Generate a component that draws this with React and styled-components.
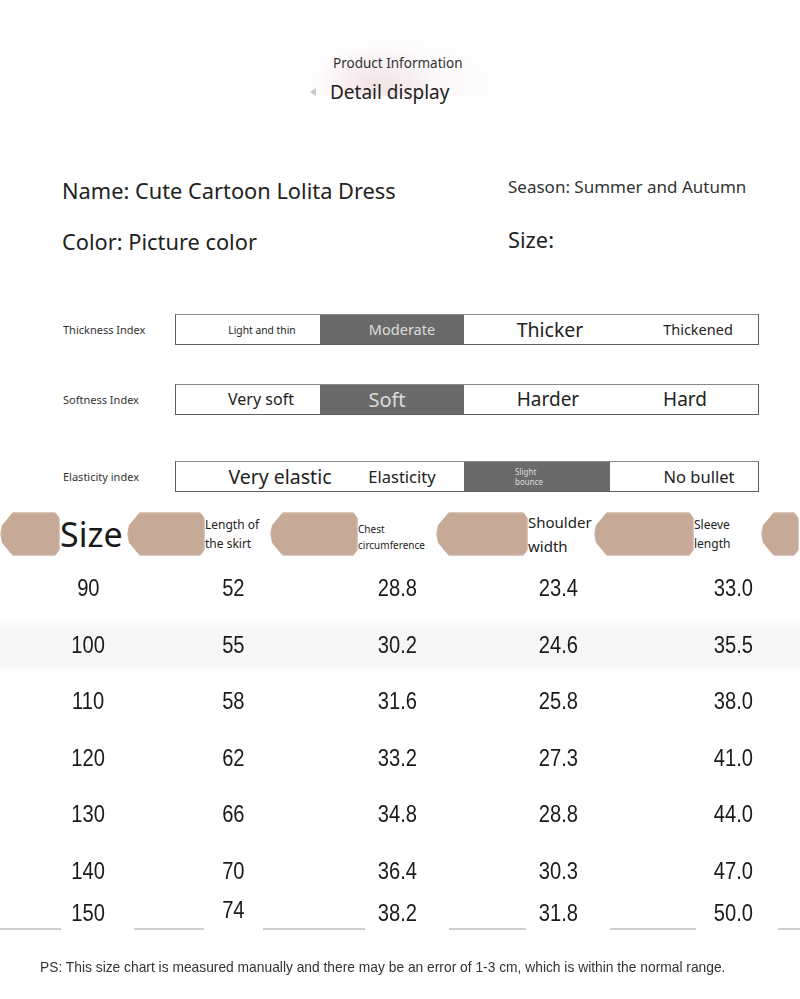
import React from "react";
import styled, { createGlobalStyle } from "styled-components";

const GlobalStyle = createGlobalStyle`
    body {
        margin: 0;
        background: #ffffff;
        font-family: "Noto Sans", "Liberation Sans", sans-serif;
        color: #222222;
    }
`;

const indexRows = [
    {
        label: "Thickness Index",
        items: [
            { text: "Light and thin", size: 10.3, shift: 14 },
            { text: "Moderate", size: 14.5, shift: 10, active: true },
            { text: "Thicker", size: 19.5, shift: 13 },
            { text: "Thickened", size: 14.5, shift: 14 },
        ],
    },
    {
        label: "Softness Index",
        items: [
            { text: "Very soft", size: 16, shift: 13 },
            { text: "Soft", size: 20, shift: -5, active: true },
            { text: "Harder", size: 19, shift: 11 },
            { text: "Hard", size: 19, shift: 1 },
        ],
    },
    {
        label: "Elasticity index",
        items: [
            { text: "Very elastic", size: 19.5, shift: 32 },
            { text: "Elasticity", size: 16.5, shift: 10 },
            { text: "Slight\nbounce", size: 8, shift: -8, active: true },
            { text: "No bullet", size: 16.5, shift: 15 },
        ],
    },
];

const sizes = [
    ["90", "52", "28.8", "23.4", "33.0"],
    ["100", "55", "30.2", "24.6", "35.5"],
    ["110", "58", "31.6", "25.8", "38.0"],
    ["120", "62", "33.2", "27.3", "41.0"],
    ["130", "66", "34.8", "28.8", "44.0"],
    ["140", "70", "36.4", "30.3", "47.0"],
];

const App = () => {
    return (
        <Page>
            <GlobalStyle />
            <Header>
                <SubTitle>Product Information</SubTitle>
                <Title>Detail display</Title>
            </Header>

            <InfoGrid>
                <BigInfo>Name: Cute Cartoon Lolita Dress</BigInfo>
                <SmallInfo>Season: Summer and Autumn</SmallInfo>
                <BigInfo>Color: Picture color</BigInfo>
                <BigInfo>Size:</BigInfo>
            </InfoGrid>

            <Indexes>
                {indexRows.map((row) => (
                    <IndexRow key={row.label}>
                        <IndexLabel>{row.label}</IndexLabel>
                        <Bar>
                            {row.items.map((item) => (
                                <Segment key={item.text} $active={item.active}>
                                    <SegmentText
                                        $size={item.size}
                                        $shift={item.shift}
                                    >
                                        {item.text}
                                    </SegmentText>
                                </Segment>
                            ))}
                        </Bar>
                    </IndexRow>
                ))}
            </Indexes>

            <Band>
                <Blob $w={60} />
                <SizeHead>Size</SizeHead>
                <Blob $w={78} />
                <HeadLabel $w={65} $size={12}>
                    Length of
                    <br />
                    the skirt
                </HeadLabel>
                <Blob $w={88} />
                <HeadLabel $w={78} $size={10} $drop>
                    Chest
                    <br />
                    circumference
                </HeadLabel>
                <Blob $w={92} />
                <HeadLabel $w={66} $size={15}>
                    Shoulder
                    <br />
                    width
                </HeadLabel>
                <Blob $w={100} />
                <HeadLabel $w={67} $size={12}>
                    Sleeve
                    <br />
                    length
                </HeadLabel>
                <Blob $w={38} />
            </Band>

            <Table>
                {sizes.map((row, i) => (
                    <DataRow key={row[0]} $shade={i === 1}>
                        {row.map((v, j) => (
                            <Cell key={j}>
                                <Num>{v}</Num>
                            </Cell>
                        ))}
                    </DataRow>
                ))}
                <LastRow>
                    <Cell>
                        <Num>150</Num>
                    </Cell>
                    <Cell $lift>
                        <Num>74</Num>
                    </Cell>
                    <Cell>
                        <Num>38.2</Num>
                    </Cell>
                    <Cell>
                        <Num>31.8</Num>
                    </Cell>
                    <Cell>
                        <Num>50.0</Num>
                    </Cell>
                </LastRow>
                <Rule>
                    <Dash $w={61} />
                    <Dash $w={70} $gap={73} />
                    <Dash $w={102} $gap={59} />
                    <Dash $w={77} $gap={84} />
                    <Dash $w={86} $gap={84} />
                    <Dash $w={22} $gap={82} />
                </Rule>
            </Table>

            <Note>
                PS: This size chart is measured manually and there may be an
                error of 1-3 cm, which is within the normal range.
            </Note>
        </Page>
    );
};

const Page = styled.div`
    width: 800px;
    height: 999px;
    overflow: hidden;
    background: #ffffff;
`;

const Header = styled.header`
    display: flex;
    flex-direction: column;
    align-items: flex-start;
    padding: 53px 0 0 330px;
    height: 96px;
    box-sizing: border-box;
    background:
        radial-gradient(
            ellipse 60px 40px at 375px 85px,
            rgba(230, 190, 198, 0.35),
            rgba(255, 255, 255, 0) 100%
        ),
        radial-gradient(
            ellipse 110px 55px at 400px 85px,
            rgba(245, 235, 238, 0.6),
            rgba(255, 255, 255, 0) 100%
        );
`;

const SubTitle = styled.div`
    font-size: 13.5px;
    line-height: 20px;
    margin-left: 3px;
    color: #333;
`;

const Title = styled.div`
    font-size: 19px;
    line-height: 26px;
    margin-top: 6px;
    color: #222;
    position: relative;

    &::before {
        content: "";
        position: absolute;
        left: -20px;
        top: 9px;
        border: 4px solid transparent;
        border-right: 6px solid #c8c8c8;
        border-left: none;
    }
`;

const InfoGrid = styled.section`
    display: grid;
    grid-template-columns: 446px 1fr;
    grid-auto-rows: 51px;
    align-items: center;
    padding: 69px 0 0 62px;
`;

const BigInfo = styled.div`
    font-size: 21.8px;
    color: #222;
    line-height: 30px;
    &:last-child {
        margin-top: -4px;
    }
`;

const SmallInfo = styled.div`
    font-size: 17px;
    color: #333;
    line-height: 24px;
    margin-top: -8px;
`;

const Indexes = styled.section`
    display: flex;
    flex-direction: column;
    gap: 39px;
    padding: 47px 0 0 63px;
`;

const IndexRow = styled.div`
    display: flex;
    align-items: center;
    &:nth-child(3) {
        margin-top: 7px;
    }
`;

const IndexLabel = styled.div`
    width: 112px;
    font-size: 11px;
    color: #333;
`;

const Bar = styled.div`
    display: grid;
    grid-template-columns: 144px 144px 146px 1fr;
    width: 584px;
    height: 31px;
    box-sizing: border-box;
    border: 1.5px solid #5e5e5e;
    border-top-color: #8a8a8a;
`;

const Segment = styled.div`
    display: flex;
    align-items: center;
    justify-content: center;
    overflow: visible;
    background: ${({ $active }) => ($active ? "#6a6a6a" : "#ffffff")};
    color: ${({ $active }) => ($active ? "#dcdcdc" : "#222")};
`;

const SegmentText = styled.span`
    white-space: pre;
    text-align: left;
    font-size: ${({ $size }) => $size}px;
    line-height: ${({ $size }) => Math.round($size * 1.2)}px;
    transform: translateX(${({ $shift }) => $shift}px);
`;

const Band = styled.div`
    display: flex;
    align-items: center;
    height: 48px;
    margin-top: 18px;
`;

const Blob = styled.div`
    flex: 0 0 ${({ $w }) => $w}px;
    height: 44px;
    background: #c6aa97;
    filter: blur(1.2px);
    clip-path: polygon(
        13px 0,
        calc(100% - 5px) 0,
        100% 15%,
        100% 85%,
        calc(100% - 5px) 100%,
        13px 100%,
        2px 70%,
        0 50%,
        2px 30%
    );
`;

const SizeHead = styled.div`
    flex: 0 0 67px;
    font-size: 34px;
    line-height: 44px;
    color: #1a1a1a;
`;

const HeadLabel = styled.div`
    flex: 0 0 ${({ $w }) => $w}px;
    font-size: ${({ $size }) => $size}px;
    line-height: ${({ $size }) => Math.round($size * 1.6)}px;
    color: #222;
    white-space: nowrap;
    margin-top: ${({ $drop }) => ($drop ? "6px" : "0")};
`;

const Table = styled.section`
    display: flex;
    flex-direction: column;
    margin-top: 2px;
`;

const DataRow = styled.div`
    display: grid;
    grid-template-columns: 176px 114px 214px 108px 192px;
    align-items: center;
    height: 56.5px;
    background: ${({ $shade }) =>
        $shade
            ? "linear-gradient(#fff 8%, #f6f6f6 20%, #f6f6f6 85%, #fff)"
            : "transparent"};
`;

const LastRow = styled(DataRow)`
    height: 30px;
    margin-top: -1px;
`;

const Cell = styled.div`
    text-align: center;
    margin-top: ${({ $lift }) => ($lift ? "-6px" : "0")};

    &:last-child {
        padding-left: 50px;
    }
`;

const Num = styled.span`
    display: inline-block;
    font-family: "Liberation Sans", "Noto Sans", sans-serif;
    font-size: 24px;
    line-height: 28px;
    color: #1a1a1a;
    transform: scaleX(0.84);
`;

const Rule = styled.div`
    display: flex;
    height: 2px;
`;

const Dash = styled.div`
    flex: 0 0 ${({ $w }) => $w}px;
    margin-left: ${({ $gap }) => $gap || 0}px;
    background: #cfcfcf;
`;

const Note = styled.p`
    margin: 28px 0 0 40px;
    width: 760px;
    font-family: "Liberation Sans", "Noto Sans", sans-serif;
    font-size: 15px;
    color: #333;
    white-space: nowrap;
    transform: scaleX(0.92);
    transform-origin: left center;
`;

export default App;
